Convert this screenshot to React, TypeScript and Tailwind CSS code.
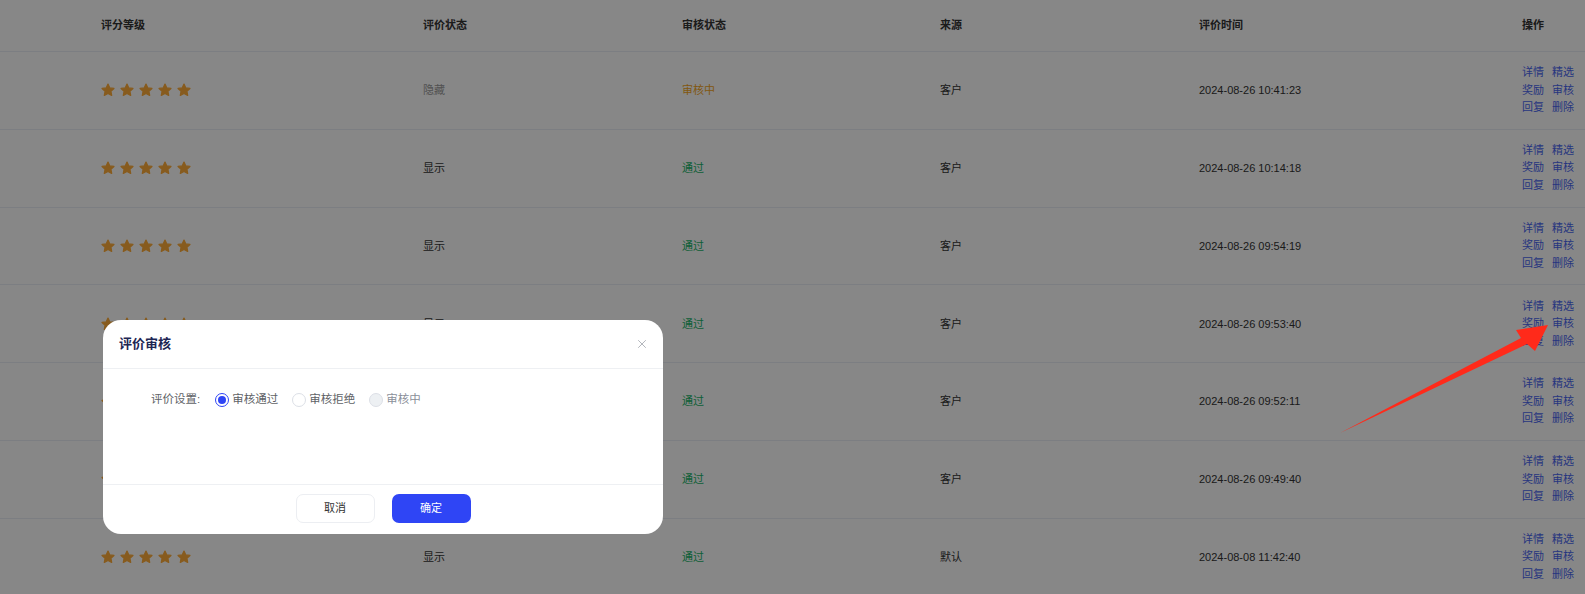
import { X } from 'lucide-react';

type Row = { show: string; audit: string; source: string; time: string };

const rows: Row[] = [
  { show: '隐藏', audit: '审核中', source: '客户', time: '2024-08-26 10:41:23' },
  { show: '显示', audit: '通过', source: '客户', time: '2024-08-26 10:14:18' },
  { show: '显示', audit: '通过', source: '客户', time: '2024-08-26 09:54:19' },
  { show: '显示', audit: '通过', source: '客户', time: '2024-08-26 09:53:40' },
  { show: '显示', audit: '通过', source: '客户', time: '2024-08-26 09:52:11' },
  { show: '显示', audit: '通过', source: '客户', time: '2024-08-26 09:49:40' },
  { show: '显示', audit: '通过', source: '默认', time: '2024-08-08 11:42:40' },
];

function Star() {
  return (
    <svg width="14" height="14" viewBox="0 0 24 24">
      <path
        d="M12 1.8l3.1 6.6 7.1.9-5.2 4.9 1.3 7.1L12 17.9l-6.3 3.4 1.3-7.1-5.2-4.9 7.1-.9z"
        fill="#ffad3a"
        stroke="#ffad3a"
        strokeWidth="2.2"
        strokeLinejoin="round"
      />
    </svg>
  );
}

function Radio({ label, state }: { label: string; state: 'on' | 'off' | 'disabled' }) {
  return (
    <label className="flex items-center gap-[3px] mr-[14px]">
      {state === 'on' && (
        <span className="w-[14px] h-[14px] rounded-full border border-[#2f45f5] flex items-center justify-center">
          <span className="w-[8px] h-[8px] rounded-full bg-[#2f45f5]" />
        </span>
      )}
      {state === 'off' && <span className="w-[14px] h-[14px] rounded-full border border-[#dcdfe6] bg-white" />}
      {state === 'disabled' && <span className="w-[14px] h-[14px] rounded-full border border-[#dcdfe6] bg-[#edf0f3]" />}
      <span className={state === 'disabled' ? 'text-[#8a8f99]' : 'text-[#606266]'}>{label}</span>
    </label>
  );
}

export default function App() {
  return (
    <div
      className="relative w-[1585px] h-[594px] overflow-hidden bg-white text-[11px]"
      style={{ fontFamily: '"Liberation Sans", "Noto Sans CJK SC", sans-serif' }}
    >
      {/* table */}
      <div className="flex h-[52px] items-center border-b border-[#ebeef5] font-bold text-[#333]">
        <div className="w-[101px]" />
        <div className="w-[322px]">评分等级</div>
        <div className="w-[259px]">评价状态</div>
        <div className="w-[258px]">审核状态</div>
        <div className="w-[259px]">来源</div>
        <div className="w-[323px]">评价时间</div>
        <div className="flex-1">操作</div>
      </div>
      {rows.map((r, i) => (
        <div key={i} className="flex h-[77.8px] items-center border-b border-[#ebeef5] text-[#333]">
          <div className="w-[101px]" />
          <div className="w-[322px] flex gap-[5px]">
            {[0, 1, 2, 3, 4].map((s) => (
              <Star key={s} />
            ))}
          </div>
          <div className={`w-[259px] ${r.show === '隐藏' ? 'text-[#999]' : 'text-[#333]'}`}>{r.show}</div>
          <div className={`w-[258px] ${r.audit === '审核中' ? 'text-[#f5a623]' : 'text-[#19b46a]'}`}>{r.audit}</div>
          <div className="w-[259px]">{r.source}</div>
          <div className="w-[323px]">{r.time}</div>
          <div className="flex-1 text-[#4a66f0] leading-[17.5px]">
            <div className="flex gap-[8px]"><span>详情</span><span>精选</span></div>
            <div className="flex gap-[8px]"><span>奖励</span><span>审核</span></div>
            <div className="flex gap-[8px]"><span>回复</span><span>删除</span></div>
          </div>
        </div>
      ))}

      {/* mask */}
      <div className="absolute inset-0 bg-black/[0.47]" />

      {/* arrow */}
      <svg className="absolute left-0 top-0" width="1585" height="594">
        <polygon points="1340,433 1521,338 1516,330 1548,325 1535,351 1527,344" fill="#ff2a1a" />
      </svg>

      {/* dialog */}
      <div className="absolute left-[103px] top-[320px] w-[560px] h-[214px] bg-white rounded-[18px] flex flex-col">
        <div className="h-[49px] flex items-center justify-between pl-[16px] pr-[14px] border-b border-[#eef0f3]">
          <span className="text-[13px] font-bold text-[#1d2654]">评价审核</span>
          <X size={14} strokeWidth={1.3} className="text-[#9a9ea6]" />
        </div>
        <div className="flex-1 pt-[22px] pl-[48px] flex items-start text-[11.5px]">
          <div className="flex items-center">
            <span className="text-[#606266] mr-[15px]">评价设置:</span>
            <Radio label="审核通过" state="on" />
            <Radio label="审核拒绝" state="off" />
            <Radio label="审核中" state="disabled" />
          </div>
        </div>
        <div className="h-[50px] border-t border-[#eef0f3] flex items-center justify-center gap-[17px] pb-[2px]">
          <button className="w-[79px] h-[29px] rounded-[7px] border border-[#eceef2] text-[#333] bg-white">取消</button>
          <button className="w-[79px] h-[29px] rounded-[7px] bg-[#2f45f5] text-white">确定</button>
        </div>
      </div>
    </div>
  );
}
